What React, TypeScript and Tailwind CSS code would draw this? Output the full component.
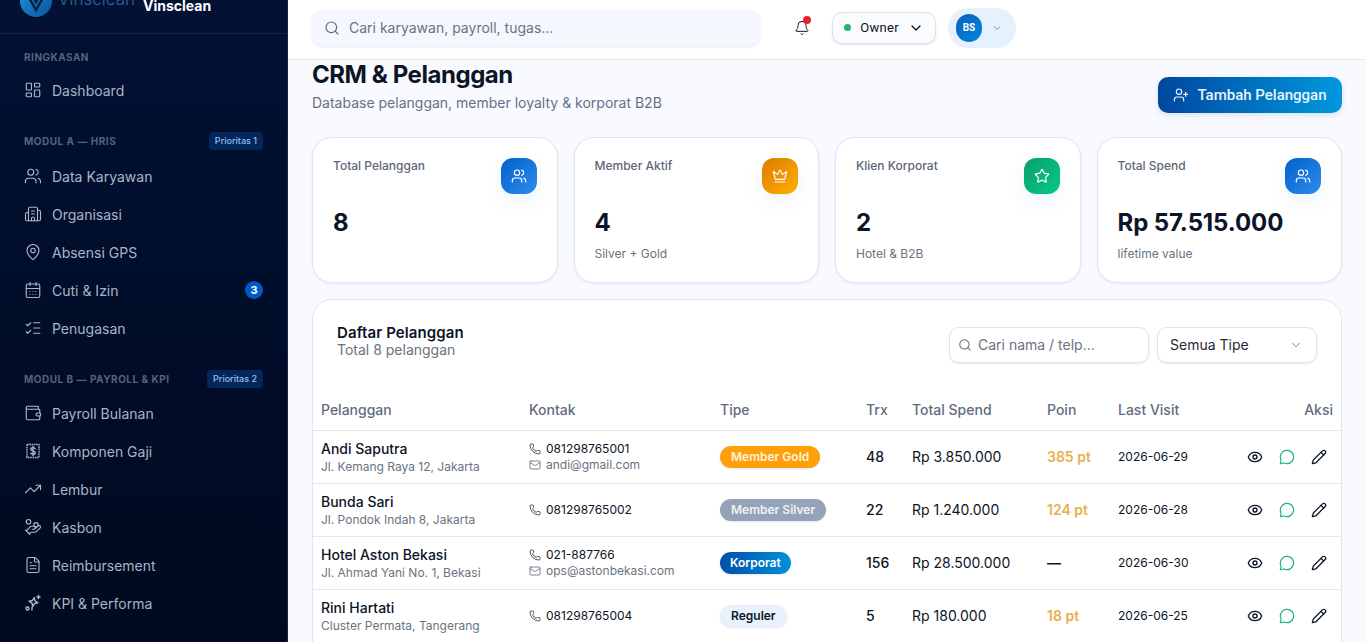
import {
  Bell,
  Building2,
  CalendarDays,
  ChevronDown,
  Crown,
  Eye,
  FileText,
  HandCoins,
  LayoutDashboard,
  ListChecks,
  Mail,
  MapPin,
  MessageCircle,
  Pencil,
  Phone,
  Search,
  Star,
  TrendingUp,
  UserPlus,
  Users,
  Wallet,
} from "lucide-react";
import type { ReactNode } from "react";

const inter = "font-['Inter',sans-serif]";

function PayslipIcon() {
  return (
    <svg viewBox="0 0 18 18" width="18" height="18" fill="none" stroke="currentColor" strokeWidth="1.4">
      <rect x="3" y="2.5" width="12" height="13" strokeDasharray="1.6 0.7" />
      <path d="M11.2 6.6c-.4-.7-1.2-1-2.2-1-1.200 0-2.100.6-2.100 1.600 0 2.300 4.300 1.100 4.300 3.500 0 1-.9 1.600-2.200 1.600-1 0-1.900-.4-2.300-1.100M9 4.500v9" strokeLinecap="round" />
    </svg>
  );
}

function KpiIcon() {
  return (
    <svg viewBox="0 0 18 18" width="18" height="18" fill="none" stroke="currentColor" strokeWidth="1.4" strokeLinejoin="round" strokeLinecap="round">
      <path d="M9.500 3.500l1.300 3.200 3.200 1.300-3.200 1.300-1.300 3.200-1.300-3.200-3.200-1.300 3.200-1.300z" transform="rotate(10 9.500 8)" />
      <path d="M14.500 1.500v3M13 3h3" />
      <circle cx="3.500" cy="14.500" r="1.500" />
      <path d="M8 13.500v2.500" />
    </svg>
  );
}

function NavItem({ icon, label, badge }: { icon: ReactNode; label: string; badge?: string }) {
  return (
    <div className="flex h-[38px] items-center gap-[10px] px-3 text-[14px] text-[#a9b4c6]">
      <span className="flex h-[18px] w-[18px] items-center justify-center text-[#aeb8c9]">{icon}</span>
      <span className="flex-1">{label}</span>
      {badge && (
        <span className="flex h-[18px] w-[18px] items-center justify-center rounded-full bg-[#0059c4] text-[11px] font-bold text-white">
          {badge}
        </span>
      )}
    </div>
  );
}

function SectionLabel({ title, tag }: { title: string; tag?: string }) {
  return (
    <div className="flex items-center justify-between px-3">
      <span className="text-[10px] font-bold tracking-[0.5px] text-[#56637a]">{title}</span>
      {tag && (
        <span className="flex h-[18px] items-center rounded-[4px] bg-[#04265a] px-[6px] text-[9px] font-medium text-[#8fc1f5]">
          {tag}
        </span>
      )}
    </div>
  );
}

function Sidebar() {
  return (
    <aside className="flex h-full w-[288px] shrink-0 flex-col overflow-hidden border-r border-[#16284a] bg-gradient-to-b from-[#021134] to-[#000a1f]">
      <div className="flex h-[34px] shrink-0 items-end border-b border-[#13264a] pl-5">
        <svg viewBox="0 0 32 32" className="mb-4 h-8 w-8 shrink-0">
          <defs>
            <linearGradient id="logo" x1="0" y1="0" x2="1" y2="1">
              <stop offset="0" stopColor="#1f9bd6" />
              <stop offset="1" stopColor="#0b4f9e" />
            </linearGradient>
          </defs>
          <circle cx="16" cy="16" r="16" fill="url(#logo)" />
          <path d="M7 9l9 16 9-16h-5l-4 8-2-4h3" fill="none" stroke="#04204a" strokeWidth="2.5" />
        </svg>
        <span className="mb-[24px] ml-[6px] text-[17px] font-light leading-[20px] text-[#2a6f9e]">Vinsclean</span>
        <span className="mb-[20px] ml-[8px] text-[14px] font-bold leading-[14px] text-white">Vinsclean</span>
      </div>
      <div className="px-3 pt-4">
        <SectionLabel title="RINGKASAN" />
        <div className="mt-[6px]">
          <NavItem icon={<LayoutDashboard size={18} strokeWidth={1.5} />} label="Dashboard" />
        </div>
        <div className="mt-[23px]">
          <SectionLabel title="MODUL A — HRIS" tag="Prioritas 1" />
        </div>
        <div className="mt-[7px]">
          <NavItem icon={<Users size={18} strokeWidth={1.5} />} label="Data Karyawan" />
          <NavItem icon={<Building2 size={18} strokeWidth={1.5} />} label="Organisasi" />
          <NavItem icon={<MapPin size={18} strokeWidth={1.5} />} label="Absensi GPS" />
          <NavItem icon={<CalendarDays size={18} strokeWidth={1.5} />} label="Cuti & Izin" badge="3" />
          <NavItem icon={<ListChecks size={18} strokeWidth={1.5} />} label="Penugasan" />
        </div>
        <div className="mt-[23px]">
          <SectionLabel title="MODUL B — PAYROLL & KPI" tag="Prioritas 2" />
        </div>
        <div className="mt-[6px]">
          <NavItem icon={<Wallet size={18} strokeWidth={1.5} />} label="Payroll Bulanan" />
          <NavItem icon={<PayslipIcon />} label="Komponen Gaji" />
          <NavItem icon={<TrendingUp size={18} strokeWidth={1.5} />} label="Lembur" />
          <NavItem icon={<HandCoins size={18} strokeWidth={1.5} />} label="Kasbon" />
          <NavItem icon={<FileText size={18} strokeWidth={1.5} />} label="Reimbursement" />
          <NavItem icon={<KpiIcon />} label="KPI & Performa" />
        </div>
      </div>
    </aside>
  );
}

function Topbar() {
  return (
    <header className="flex h-[60px] shrink-0 items-center border-b border-[#e5e8ee] bg-white pb-1 pl-6">
      <div className="flex h-9 w-[448px] items-center gap-[9px] rounded-xl bg-[#f4f8fe] px-3 shadow-[0_1px_3px_rgba(20,50,100,0.12)]">
        <Search size={16} strokeWidth={1.75} className="text-[#5f6b7c]" />
        <span className="text-[14px] text-[#6b7280]">Cari karyawan, payroll, tugas...</span>
      </div>
      <div className="relative ml-[34px] flex h-4 w-4 items-center justify-center text-[#0b1526]">
        <Bell size={16} strokeWidth={1.5} />
        <span className="absolute -right-[1px] -top-[4px] h-2 w-2 rounded-full bg-[#e5252a]" />
      </div>
      <div className="ml-[22px] flex h-8 w-[104px] items-center justify-center gap-[9px] rounded-[10px] border border-[#dfe4ec] bg-[#f9fbff] font-['Roboto',sans-serif] text-[13px] tracking-[0.3px] text-[#0b1526] shadow-[0_1px_2px_rgba(20,50,100,0.12)]">
        <span className="h-[7px] w-[7px] rounded-full bg-[#1fb573]" />
        <span>Owner</span>
        <ChevronDown size={16} strokeWidth={2} />
      </div>
      <div className="ml-3 flex h-10 w-[68px] items-center gap-[9px] rounded-[20px] bg-[#e6f1fe] pl-2">
        <span className="flex h-7 w-[26px] items-center justify-center rounded-full bg-gradient-to-br from-[#0a5fc0] to-[#0087d8] font-['Roboto',sans-serif] text-[10px] font-bold text-white">
          BS
        </span>
        <ChevronDown size={12} strokeWidth={1.75} className="text-[#7b8494]" />
      </div>
    </header>
  );
}

function StatCard({
  title,
  value,
  note,
  icon,
  tone,
}: {
  title: string;
  value: string;
  note?: string;
  icon: ReactNode;
  tone: string;
}) {
  return (
    <div className="relative h-[146px] rounded-[20px] border border-[#dfe6f1] bg-white px-5 pt-5 shadow-[0_1px_3px_rgba(20,50,100,0.08)]">
      <div className="text-[12px] font-medium leading-[16px] text-[#5d6778]">{title}</div>
      <div className={`absolute right-5 top-5 flex h-9 w-9 items-center justify-center rounded-[12px] text-white shadow-[0_8px_20px_rgba(20,80,180,0.07)] ${tone}`}>
        {icon}
      </div>
      <div className="mt-[33px] text-[24px] font-bold leading-[32px] tracking-[-0.1px] text-[#0b1526]">{value}</div>
      {note && <div className="mt-[7px] text-[12px] leading-[16px] text-[#6b7280]">{note}</div>}
    </div>
  );
}

type Customer = {
  name: string;
  address: string;
  phone: string;
  email?: string;
  type: string;
  typeClass: string;
  trx: string;
  spend: string;
  points: string;
  visit: string;
};

const customers: Customer[] = [
  {
    name: "Andi Saputra",
    address: "Jl. Kemang Raya 12, Jakarta",
    phone: "081298765001",
    email: "andi@gmail.com",
    type: "Member Gold",
    typeClass: "px-[11px] bg-[#ff9f0a] text-[#fff4dc]",
    trx: "48",
    spend: "Rp 3.850.000",
    points: "385 pt",
    visit: "2026-06-29",
  },
  {
    name: "Bunda Sari",
    address: "Jl. Pondok Indah 8, Jakarta",
    phone: "081298765002",
    type: "Member Silver",
    typeClass: "px-[11px] bg-[#94a3b8] text-[#eef2f7]",
    trx: "22",
    spend: "Rp 1.240.000",
    points: "124 pt",
    visit: "2026-06-28",
  },
  {
    name: "Hotel Aston Bekasi",
    address: "Jl. Ahmad Yani No. 1, Bekasi",
    phone: "021-887766",
    email: "ops@astonbekasi.com",
    type: "Korporat",
    typeClass: "px-[10px] bg-gradient-to-r from-[#004fa8] to-[#0090dc] text-white",
    trx: "156",
    spend: "Rp 28.500.000",
    points: "—",
    visit: "2026-06-30",
  },
  {
    name: "Rini Hartati",
    address: "Cluster Permata, Tangerang",
    phone: "081298765004",
    type: "Reguler",
    typeClass: "px-[11px] bg-[#e8f1fc] text-[#0b1526]",
    trx: "5",
    spend: "Rp 180.000",
    points: "18 pt",
    visit: "2026-06-25",
  },
];

function CustomerTable() {
  return (
    <div className="mt-4 overflow-hidden rounded-t-[20px] border border-[#dfe6f1] bg-white">
      <div className="flex h-[89px] items-start justify-between pl-6 pr-6">
        <div className="pt-[25px]">
          <div className="text-[15px] font-semibold leading-[16px] tracking-[0.1px] text-[#0b1526]">Daftar Pelanggan</div>
          <div className="mt-[1px] text-[14px] leading-[16px] text-[#6b7280]">Total 8 pelanggan</div>
        </div>
        <div className="flex gap-2 pt-[27px]">
          <div className="flex h-9 w-[200px] items-center gap-[6px] rounded-[10px] border border-[#dfe4ec] bg-white px-2 pb-[1px] shadow-[0_1px_2px_rgba(20,50,100,0.1)]">
            <Search size={14} strokeWidth={1.75} className="text-[#5f6b7c]" />
            <span className="text-[14px] text-[#6b7280]">Cari nama / telp...</span>
          </div>
          <div className="flex h-9 w-40 items-center justify-between rounded-[10px] border border-[#dfe4ec] bg-white pb-[1px] pl-3 pr-[13px] shadow-[0_1px_2px_rgba(20,50,100,0.1)]">
            <span className="text-[14px] text-[#1f2937]">Semua Tipe</span>
            <ChevronDown size={14} strokeWidth={1.5} className="text-[#6b7280]" />
          </div>
        </div>
      </div>
      <table className="w-full table-fixed border-collapse">
        <colgroup>
          <col className="w-[208px]" />
          <col className="w-[191px]" />
          <col className="w-[146px]" />
          <col className="w-[46px]" />
          <col className="w-[135px]" />
          <col className="w-[71px]" />
          <col />
        </colgroup>
        <thead>
          <tr className="h-[41px] border-b border-[#dfe6f1] text-left text-[14px] font-medium text-[#626c7d]">
            <th className="px-2 font-medium">Pelanggan</th>
            <th className="px-2 font-medium">Kontak</th>
            <th className="px-2 font-medium">Tipe</th>
            <th className="px-2 font-medium">Trx</th>
            <th className="px-2 font-medium">Total Spend</th>
            <th className="px-2 font-medium">Poin</th>
            <th className="px-2 font-medium">
              <div className="flex justify-between">
                <span>Last Visit</span>
                <span>Aksi</span>
              </div>
            </th>
          </tr>
        </thead>
        <tbody>
          {customers.map((c) => (
            <tr key={c.name} className="h-[53px] border-b border-[#e4e8f0] text-[#0b1526]">
              <td className="px-2 pt-[2px]">
                <div className="text-[14px] font-medium leading-[18px]">{c.name}</div>
                <div className="text-[12px] leading-[18px] text-[#6b7280]">{c.address}</div>
              </td>
              <td className="px-2">
                <div className="flex items-center gap-[5px] text-[12px] leading-[16px]">
                  <Phone size={12} strokeWidth={1.75} className="text-[#374151]" />
                  {c.phone}
                </div>
                {c.email && (
                  <div className="flex items-center gap-[5px] text-[12px] leading-[16px] text-[#6b7280]">
                    <Mail size={12} strokeWidth={1.75} />
                    {c.email}
                  </div>
                )}
              </td>
              <td className="px-2 pb-[2px]">
                <span className={`inline-flex h-[22px] items-center rounded-full text-[12px] font-semibold shadow-[0_1px_2px_rgba(20,50,100,0.12)] ${c.typeClass}`}>
                  {c.type}
                </span>
              </td>
              <td className="px-2 text-[14px] font-medium">{c.trx}</td>
              <td className="px-2 text-[14px]">{c.spend}</td>
              <td className={`px-2 text-[14px] font-semibold ${c.points === "—" ? "text-[#0b1526]" : "text-[#e9b04c]"}`}>
                {c.points}
              </td>
              <td className="px-2">
                <div className="flex items-center">
                  <span className="flex-1 text-[12px]">{c.visit}</span>
                  <div className="flex items-center gap-[16px] pr-[6px]">
                    <Eye size={16} strokeWidth={2} />
                    <MessageCircle size={16} strokeWidth={1.75} className="text-[#14b37d]" />
                    <Pencil size={16} strokeWidth={1.9} />
                  </div>
                </div>
              </td>
            </tr>
          ))}
        </tbody>
      </table>
    </div>
  );
}

export default function App() {
  return (
    <div className={`flex h-screen w-full overflow-hidden bg-[#f8faff] ${inter}`}>
      <Sidebar />
      <main className="flex min-w-0 flex-1 flex-col">
        <Topbar />
        <div className="flex-1 overflow-hidden pl-6 pr-[23px]">
          <div className="mt-[3px] flex items-start justify-between">
            <div>
              <h1 className="text-[24px] font-bold leading-[24px] tracking-[-0.45px] text-[#0b1526]">CRM & Pelanggan</h1>
              <p className="mt-[6px] text-[14px] leading-[20px] text-[#667085]">
                Database pelanggan, member loyalty & korporat B2B
              </p>
            </div>
            <button className="mt-[14px] flex h-9 w-[184px] items-center justify-center gap-2 rounded-[10px] bg-gradient-to-r from-[#00479f] to-[#0099dd] font-['Roboto',sans-serif] text-[15px] font-medium text-[#e8f4ff] shadow-[0_2px_6px_rgba(0,80,170,0.15)]">
              <UserPlus size={16} strokeWidth={1.75} />
              Tambah Pelanggan
            </button>
          </div>
          <div className="mt-6 grid grid-cols-4 gap-4">
            <StatCard
              title="Total Pelanggan"
              value="8"
              icon={<Users size={16} strokeWidth={1.75} />}
              tone="bg-gradient-to-br from-[#0061c8] to-[#2b8df0]"
            />
            <StatCard
              title="Member Aktif"
              value="4"
              note="Silver + Gold"
              icon={<Crown size={16} strokeWidth={1.75} />}
              tone="bg-gradient-to-br from-[#dd7a00] to-[#ffb000]"
            />
            <StatCard
              title="Klien Korporat"
              value="2"
              note="Hotel & B2B"
              icon={<Star size={16} strokeWidth={1.75} />}
              tone="bg-gradient-to-br from-[#0a9f6c] to-[#04c98a]"
            />
            <StatCard
              title="Total Spend"
              value="Rp 57.515.000"
              note="lifetime value"
              icon={<Users size={16} strokeWidth={1.75} />}
              tone="bg-gradient-to-br from-[#0061c8] to-[#2b8df0]"
            />
          </div>
          <CustomerTable />
        </div>
      </main>
    </div>
  );
}
